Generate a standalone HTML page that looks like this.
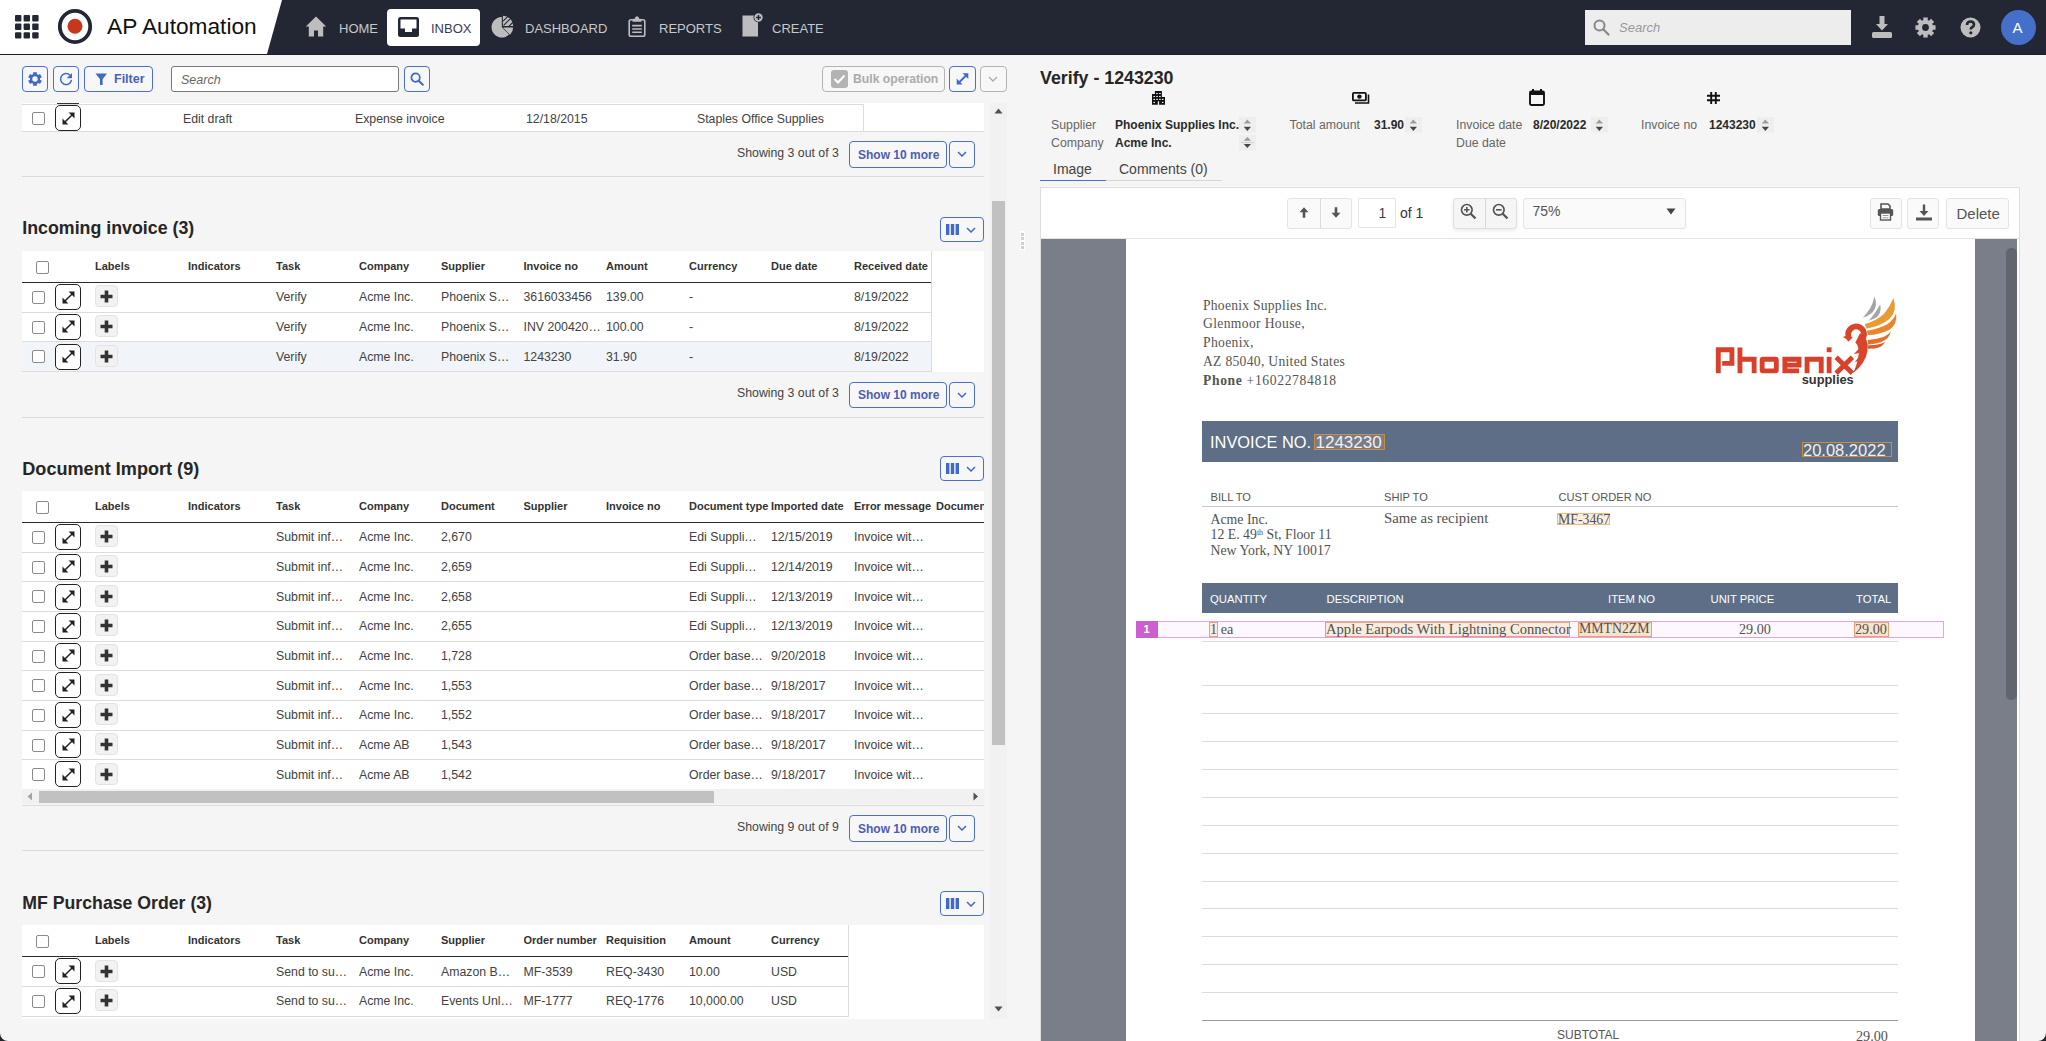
<!DOCTYPE html><html><head><meta charset="utf-8"><style>
*{box-sizing:border-box;margin:0;padding:0}
html,body{width:2046px;height:1041px;overflow:hidden;background:#f5f5f5;font-family:"Liberation Sans",sans-serif;color:#333;position:relative}
.a{position:absolute}
.t{position:absolute;white-space:nowrap;line-height:1}
#nav{position:absolute;left:0;top:0;width:2046px;height:55px;background:#222733;border-bottom:1px solid #1a1e27}
#brand{position:absolute;left:0;top:0;width:282px;height:54px;background:#fff;clip-path:polygon(0 0,282px 0,267px 54px,0 54px)}
.navtxt{position:absolute;color:#c8c8c8;font-size:13px;line-height:1;white-space:nowrap}
.bb{position:absolute;border:1px solid #4a6fd0;border-radius:4px;background:#f7f7f7}
.bg{position:absolute;border:1px solid #b4b4b4;border-radius:4px;background:#f7f7f7}
.cb{position:absolute;width:13px;height:13px;border:1px solid #8a8a8a;border-radius:2px;background:#fff}
.ex{position:absolute;width:26px;height:26px;border:1.3px solid #222;border-radius:5px;background:#fff}
.pl{position:absolute;width:23px;height:22px;border:1px solid #e3e3e3;border-radius:4px;background:#f2f2f2}
.cell{position:absolute;font-size:12.3px;color:#424242;white-space:nowrap;line-height:1}
.hd{position:absolute;font-size:11px;font-weight:bold;color:#333;white-space:nowrap;line-height:1}
.h2{position:absolute;font-size:17.5px;font-weight:bold;color:#262626;white-space:nowrap;line-height:1}
.hl{position:absolute;height:1px;background:#dcdcdc}
.show{position:absolute;font-size:12.3px;color:#444;white-space:nowrap;line-height:1}
.sbtn{position:absolute;font-size:12px;font-weight:bold;color:#4d5cb5;white-space:nowrap;line-height:1}
.ser{font-family:"Liberation Serif",serif}
</style></head><body>
<div id="nav"></div>
<div id="brand"></div>
<svg class="a" style="left:15.4px;top:15.2px" width="25" height="25"><rect x="0.0" y="0.0" width="6.4" height="6.4" rx="1" fill="#222733"/><rect x="0.0" y="8.6" width="6.4" height="6.4" rx="1" fill="#222733"/><rect x="0.0" y="17.2" width="6.4" height="6.4" rx="1" fill="#222733"/><rect x="8.6" y="0.0" width="6.4" height="6.4" rx="1" fill="#222733"/><rect x="8.6" y="8.6" width="6.4" height="6.4" rx="1" fill="#222733"/><rect x="8.6" y="17.2" width="6.4" height="6.4" rx="1" fill="#222733"/><rect x="17.2" y="0.0" width="6.4" height="6.4" rx="1" fill="#222733"/><rect x="17.2" y="8.6" width="6.4" height="6.4" rx="1" fill="#222733"/><rect x="17.2" y="17.2" width="6.4" height="6.4" rx="1" fill="#222733"/></svg>
<svg class="a" style="left:57px;top:8px" width="36" height="37"><ellipse cx="18" cy="18.5" rx="15.2" ry="15.6" fill="none" stroke="#222733" stroke-width="3.8"/><circle cx="18" cy="18.3" r="7.5" fill="#c8361c"/></svg>
<div class="t" style="left:107px;top:15px;font-size:22.7px;color:#111">AP Automation</div>
<svg class="a" style="left:305px;top:16px" width="22" height="21" viewBox="0 0 22 21"><path d="M11 0.5L0.8 10.5H3.8V20.5H9V14.5H13V20.5H18.2V10.5H21.2Z" fill="#bdbdbd"/></svg>
<div class="navtxt" style="left:339px;top:21.5px">HOME</div>
<div class="a" style="left:387px;top:9px;width:93px;height:37px;background:#fff;border-radius:4px"></div>
<svg class="a" style="left:398px;top:17px" width="21" height="20" viewBox="0 0 21 20"><rect x="0" y="0" width="21" height="20" rx="2.5" fill="#222733"/><path d="M2.5 2.5H18.5V11.5H14V15H7V11.5H2.5Z" fill="#fff"/></svg>
<div class="navtxt" style="left:431px;top:21.5px;color:#3b3b5c">INBOX</div>
<svg class="a" style="left:485px;top:10px" width="40" height="32" viewBox="0 0 40 32"><path d="M16.8 17.3V7A10.3 10.3 0 1 0 24.1 24.6Z" fill="#bdbdbd"/><path d="M17.9 17.6L25.1 24.8A10.3 10.3 0 0 0 28.1 17.6Z" fill="#bdbdbd"/><g transform="translate(1.1,-1.2)"><path d="M16.8 17.3H27.1A10.3 10.3 0 0 0 16.8 7Z" fill="#bdbdbd"/><path d="M17 12.3L21.8 7.5M17.5 16.6L25.2 8.9M22.8 17.5L27.6 12.7" stroke="#222733" stroke-width="1.1"/></g></svg>
<div class="navtxt" style="left:525px;top:21.5px">DASHBOARD</div>
<svg class="a" style="left:628px;top:15px" width="18" height="22" viewBox="0 0 18 22"><rect x="1.2" y="4.8" width="15.6" height="16.4" rx="1.8" fill="none" stroke="#bdbdbd" stroke-width="1.6"/><path d="M4.5 6.8V5.2Q4.5 3.8 6 3.8H6.8Q7 1.2 9 1.2Q11 1.2 11.2 3.8H12Q13.5 3.8 13.5 5.2V6.8Z" fill="#bdbdbd"/><path d="M4.2 10.6H13.8M4.2 14H13.8M4.2 17.2H13.8" stroke="#bdbdbd" stroke-width="1.6"/></svg>
<div class="navtxt" style="left:659px;top:21.5px">REPORTS</div>
<svg class="a" style="left:742px;top:12px" width="22" height="25" viewBox="0 0 22 25"><path d="M0.5 3.5H13V9H16V24.5H0.5Z" fill="#bdbdbd"/><circle cx="16.5" cy="5.5" r="5" fill="#222733"/><circle cx="16.5" cy="5.5" r="4.2" fill="#bdbdbd"/><path d="M16.5 3V8M14 5.5H19" stroke="#222733" stroke-width="1.5"/></svg>
<div class="navtxt" style="left:772px;top:21.5px">CREATE</div>
<div class="a" style="left:1585px;top:10px;width:266px;height:35px;background:#ededed"></div>
<svg class="a" style="left:1593px;top:19px" width="17" height="17" viewBox="0 0 17 17"><circle cx="6.5" cy="6.5" r="5" fill="none" stroke="#888" stroke-width="2"/><path d="M10.2 10.2L15.5 15.5" stroke="#888" stroke-width="2.2" stroke-linecap="round"/></svg>
<div class="t" style="left:1619px;top:21px;font-size:13px;font-style:italic;color:#999">Search</div>
<svg class="a" style="left:1872px;top:16px" width="20" height="22" viewBox="0 0 20 22"><path d="M7.5 0H12.5V8H16L10 14.5L4 8H7.5Z" fill="#bdbdbd"/><rect x="0" y="16" width="20" height="6" rx="1.5" fill="#bdbdbd"/></svg>
<svg class="a" style="left:1915px;top:17px" width="21" height="21"><polygon points="17.79,8.36 20.55,8.25 20.55,12.75 17.79,12.64 17.17,14.14 19.20,16.02 16.02,19.20 14.14,17.17 12.64,17.79 12.75,20.55 8.25,20.55 8.36,17.79 6.86,17.17 4.98,19.20 1.80,16.02 3.83,14.14 3.21,12.64 0.45,12.75 0.45,8.25 3.21,8.36 3.83,6.86 1.80,4.98 4.98,1.80 6.86,3.83 8.36,3.21 8.25,0.45 12.75,0.45 12.64,3.21 14.14,3.83 16.02,1.80 19.20,4.98 17.17,6.86" fill="#bdbdbd"/><circle cx="10.5" cy="10.5" r="7.3" fill="#bdbdbd"/><circle cx="10.5" cy="10.5" r="3.4" fill="#222733"/></svg>
<svg class="a" style="left:1960px;top:17px" width="21" height="21" viewBox="0 0 21 21"><circle cx="10.5" cy="10.5" r="10" fill="#bdbdbd"/><path d="M7 8Q7 4.5 10.5 4.5Q14 4.5 14 7.5Q14 9.5 11.8 10.5Q10.8 11 10.8 12.5" fill="none" stroke="#222733" stroke-width="2.6"/><circle cx="10.8" cy="15.8" r="1.6" fill="#222733"/></svg>
<div class="a" style="left:2001px;top:10px;width:35px;height:35px;border-radius:50%;background:#4470c9"></div>
<div class="t" style="left:2012.5px;top:20px;font-size:15px;color:#fff">A</div>
<div class="bb" style="left:22px;top:66px;width:26px;height:26px"></div>
<svg class="a" style="left:28px;top:72px" width="14" height="14"><polygon points="5.15,2.35 5.11,0.16 8.89,0.16 8.85,2.35 10.10,3.08 11.98,1.94 13.87,5.22 11.95,6.27 11.95,7.73 13.87,8.78 11.98,12.06 10.10,10.92 8.85,11.65 8.89,13.84 5.11,13.84 5.15,11.65 3.90,10.92 2.02,12.06 0.13,8.78 2.05,7.73 2.05,6.27 0.13,5.22 2.02,1.94 3.90,3.08" fill="#4169c9"/><circle cx="7" cy="7" r="5.0" fill="#4169c9"/><circle cx="7" cy="7" r="2.7" fill="#f7f7f7"/></svg>
<div class="bb" style="left:53px;top:66px;width:26px;height:26px"></div>
<svg class="a" style="left:59px;top:72px" width="14" height="14" viewBox="0 0 14 14"><path d="M10.9 3.1A5.5 5.5 0 1 0 12.5 7.9" fill="none" stroke="#4169c9" stroke-width="1.5"/><path d="M13 0.9V6.2H7.7Z" fill="#4169c9"/></svg>
<div class="bb" style="left:84px;top:66px;width:69px;height:26px"></div>
<svg class="a" style="left:95px;top:73px" width="13" height="13" viewBox="0 0 13 13"><path d="M0.5 0.5H12L7.6 6.2V12H5V6.2Z" fill="#4169c9"/></svg>
<div class="sbtn" style="left:114px;top:73px;font-size:12.5px;color:#4a5fc0">Filter</div>
<div class="a" style="left:171px;top:66px;width:228px;height:26px;border:1px solid #7a7a7a;border-radius:3px;background:#fff"></div>
<div class="t" style="left:181px;top:73.5px;font-size:12.5px;font-style:italic;color:#666">Search</div>
<div class="bb" style="left:404px;top:66px;width:26px;height:26px"></div>
<svg class="a" style="left:410px;top:72px" width="14" height="14" viewBox="0 0 14 14"><circle cx="5.6" cy="5.6" r="4.2" fill="none" stroke="#4169c9" stroke-width="1.8"/><path d="M8.7 8.7L12.8 12.8" stroke="#4169c9" stroke-width="2" stroke-linecap="round"/></svg>
<div class="bg" style="left:822px;top:66px;width:123px;height:26px"></div>
<div class="a" style="left:830.5px;top:70px;width:17.5px;height:18px;background:#b3b3b3;border-radius:3px"></div>
<svg class="a" style="left:833px;top:73px" width="13" height="12" viewBox="0 0 13 12"><path d="M1.5 6L5 9.5L11.5 2.5" fill="none" stroke="#fff" stroke-width="2"/></svg>
<div class="sbtn" style="left:853px;top:73px;color:#ababab;font-size:12.2px">Bulk operation</div>
<div class="bb" style="left:949px;top:66px;width:27px;height:26px"></div>
<svg class="a" style="left:955px;top:72px" width="15" height="14" viewBox="0 0 15 14"><path d="M3 11.5L12 2.5" stroke="#4169c9" stroke-width="1.8"/><path d="M7.5 1.2H13.3V7Z M1.7 6.5V12.5H7.5Z" fill="#4169c9"/></svg>
<div class="bg" style="left:980px;top:66px;width:27px;height:26px"></div>
<svg class="a" style="left:988px;top:76px" width="10" height="6" viewBox="0 0 10 6"><path d="M1 1L5 5L9 1" fill="none" stroke="#aaa" stroke-width="1.3"/></svg>
<div class="a" style="left:22px;top:103px;width:962px;height:28.5px;background:#fff"></div>
<div class="hl" style="left:22px;top:104px;width:841px"></div>
<div class="a" style="left:863px;top:104px;width:1px;height:27px;background:#dcdcdc"></div>
<div class="hl" style="left:22px;top:131px;width:962px"></div>
<div class="a" style="left:57px;top:102.5px;width:22px;height:1.5px;background:#333"></div>
<div class="cb" style="left:31.5px;top:112px"></div>
<div class="ex" style="left:55px;top:105px"></div>
<svg class="a" style="left:60.5px;top:110.5px" width="15" height="15" viewBox="0 0 15 15"><path d="M3.2 11.8L11.8 3.2" stroke="#222" stroke-width="1.5"/><path d="M7.6 1.5H13.5V7.4Z M1.5 7.6V13.5H7.4Z" fill="#222"/></svg>
<div class="cell" style="left:183px;top:113px">Edit draft</div>
<div class="cell" style="left:355px;top:113px">Expense invoice</div>
<div class="cell" style="left:526px;top:113px">12/18/2015</div>
<div class="cell" style="left:697px;top:113px">Staples Office Supplies</div>
<div class="show" style="left:737px;top:146.8px">Showing 3 out of 3</div>
<div class="bb" style="left:849px;top:141.3px;width:97.5px;height:26.5px"></div>
<div class="sbtn" style="left:858px;top:148.9px">Show 10 more</div>
<div class="bb" style="left:949px;top:141.3px;width:26px;height:26.5px"></div>
<svg class="a" style="left:957px;top:151.3px" width="10" height="6" viewBox="0 0 10 6"><path d="M1 1L5 5L9 1" fill="none" stroke="#4169c9" stroke-width="1.5"/></svg>
<div class="hl" style="left:22px;top:176px;width:962px;background:#d9d9d9"></div>
<div class="h2" style="left:22.3px;top:220px;font-size:17.8px">Incoming invoice (3)</div>
<div class="bb" style="left:940px;top:216.5px;width:44px;height:25.5px;background:#f7f7f7"></div>
<svg class="a" style="left:946px;top:223.5px" width="14" height="12" viewBox="0 0 14 12"><rect x="0" y="0" width="3.4" height="11" fill="#4169c9"/><rect x="4.8" y="0" width="3.4" height="11" fill="#4169c9"/><rect x="9.6" y="0" width="3.4" height="11" fill="#4169c9"/></svg>
<svg class="a" style="left:966px;top:226.5px" width="10" height="6" viewBox="0 0 10 6"><path d="M1 1L5 5L9 1" fill="none" stroke="#4169c9" stroke-width="1.5"/></svg>
<div class="a" style="left:22px;top:251px;width:962px;height:121.05000000000001px;background:#fff"></div>
<div class="a" style="left:931px;top:251px;width:1px;height:121.05000000000001px;background:#dcdcdc"></div>
<div class="cb" style="left:36px;top:260.5px"></div>
<div class="hd" style="left:95px;top:261.2px">Labels</div>
<div class="hd" style="left:188px;top:261.2px">Indicators</div>
<div class="hd" style="left:276px;top:261.2px;width:82px;overflow:hidden">Task</div>
<div class="hd" style="left:359px;top:261.2px;width:82px;overflow:hidden">Company</div>
<div class="hd" style="left:441px;top:261.2px;width:82px;overflow:hidden">Supplier</div>
<div class="hd" style="left:523.5px;top:261.2px;width:82px;overflow:hidden">Invoice no</div>
<div class="hd" style="left:606px;top:261.2px;width:82px;overflow:hidden">Amount</div>
<div class="hd" style="left:689px;top:261.2px;width:82px;overflow:hidden">Currency</div>
<div class="hd" style="left:771px;top:261.2px;width:82px;overflow:hidden">Due date</div>
<div class="hd" style="left:854px;top:261.2px;width:82px;overflow:hidden">Received date</div>
<div class="a" style="left:22px;top:281.5px;width:909px;height:1.6px;background:#2b2b2b"></div>
<div class="hl" style="left:22px;top:311.80px;width:909px"></div>
<div class="cb" style="left:31.5px;top:291.0px"></div>
<div class="ex" style="left:55px;top:284.2px"></div>
<svg class="a" style="left:60.5px;top:289.7px" width="15" height="15" viewBox="0 0 15 15"><path d="M3.2 11.8L11.8 3.2" stroke="#222" stroke-width="1.5"/><path d="M7.6 1.5H13.5V7.4Z M1.5 7.6V13.5H7.4Z" fill="#222"/></svg>
<div class="pl" style="left:95.3px;top:285.3px"></div>
<svg class="a" style="left:100.3px;top:290.3px" width="13" height="13" viewBox="0 0 13 13"><path d="M6.5 0.5V12.5M0.5 6.5H12.5" stroke="#333" stroke-width="3.6"/></svg>
<div class="cell" style="left:276px;top:291.30px">Verify</div>
<div class="cell" style="left:359px;top:291.30px">Acme Inc.</div>
<div class="cell" style="left:441px;top:291.30px">Phoenix S…</div>
<div class="cell" style="left:523.5px;top:291.30px">3616033456</div>
<div class="cell" style="left:606px;top:291.30px">139.00</div>
<div class="cell" style="left:689px;top:291.30px">-</div>
<div class="cell" style="left:854px;top:291.30px">8/19/2022</div>
<div class="hl" style="left:22px;top:341.45px;width:909px"></div>
<div class="cb" style="left:31.5px;top:320.65px"></div>
<div class="ex" style="left:55px;top:313.85px"></div>
<svg class="a" style="left:60.5px;top:319.35px" width="15" height="15" viewBox="0 0 15 15"><path d="M3.2 11.8L11.8 3.2" stroke="#222" stroke-width="1.5"/><path d="M7.6 1.5H13.5V7.4Z M1.5 7.6V13.5H7.4Z" fill="#222"/></svg>
<div class="pl" style="left:95.3px;top:314.95px"></div>
<svg class="a" style="left:100.3px;top:319.95px" width="13" height="13" viewBox="0 0 13 13"><path d="M6.5 0.5V12.5M0.5 6.5H12.5" stroke="#333" stroke-width="3.6"/></svg>
<div class="cell" style="left:276px;top:320.95px">Verify</div>
<div class="cell" style="left:359px;top:320.95px">Acme Inc.</div>
<div class="cell" style="left:441px;top:320.95px">Phoenix S…</div>
<div class="cell" style="left:523.5px;top:320.95px">INV 200420…</div>
<div class="cell" style="left:606px;top:320.95px">100.00</div>
<div class="cell" style="left:689px;top:320.95px">-</div>
<div class="cell" style="left:854px;top:320.95px">8/19/2022</div>
<div class="a" style="left:22px;top:342.40000000000003px;width:909px;height:29.65px;background:#f1f4f9"></div>
<div class="hl" style="left:22px;top:371.10px;width:909px"></div>
<div class="cb" style="left:31.5px;top:350.3px"></div>
<div class="ex" style="left:55px;top:343.5px"></div>
<svg class="a" style="left:60.5px;top:349.0px" width="15" height="15" viewBox="0 0 15 15"><path d="M3.2 11.8L11.8 3.2" stroke="#222" stroke-width="1.5"/><path d="M7.6 1.5H13.5V7.4Z M1.5 7.6V13.5H7.4Z" fill="#222"/></svg>
<div class="pl" style="left:95.3px;top:344.6px"></div>
<svg class="a" style="left:100.3px;top:349.6px" width="13" height="13" viewBox="0 0 13 13"><path d="M6.5 0.5V12.5M0.5 6.5H12.5" stroke="#333" stroke-width="3.6"/></svg>
<div class="cell" style="left:276px;top:350.60px">Verify</div>
<div class="cell" style="left:359px;top:350.60px">Acme Inc.</div>
<div class="cell" style="left:441px;top:350.60px">Phoenix S…</div>
<div class="cell" style="left:523.5px;top:350.60px">1243230</div>
<div class="cell" style="left:606px;top:350.60px">31.90</div>
<div class="cell" style="left:689px;top:350.60px">-</div>
<div class="cell" style="left:854px;top:350.60px">8/19/2022</div>
<div class="show" style="left:737px;top:387.3px">Showing 3 out of 3</div>
<div class="bb" style="left:849px;top:381.8px;width:97.5px;height:26.5px"></div>
<div class="sbtn" style="left:858px;top:389.40000000000003px">Show 10 more</div>
<div class="bb" style="left:949px;top:381.8px;width:26px;height:26.5px"></div>
<svg class="a" style="left:957px;top:391.8px" width="10" height="6" viewBox="0 0 10 6"><path d="M1 1L5 5L9 1" fill="none" stroke="#4169c9" stroke-width="1.5"/></svg>
<div class="hl" style="left:22px;top:416.5px;width:962px;background:#d9d9d9"></div>
<div class="h2" style="left:22.3px;top:459.6px;font-size:18.1px">Document Import (9)</div>
<div class="bb" style="left:940px;top:455.5px;width:44px;height:25.5px;background:#f7f7f7"></div>
<svg class="a" style="left:946px;top:462.5px" width="14" height="12" viewBox="0 0 14 12"><rect x="0" y="0" width="3.4" height="11" fill="#4169c9"/><rect x="4.8" y="0" width="3.4" height="11" fill="#4169c9"/><rect x="9.6" y="0" width="3.4" height="11" fill="#4169c9"/></svg>
<svg class="a" style="left:966px;top:465.5px" width="10" height="6" viewBox="0 0 10 6"><path d="M1 1L5 5L9 1" fill="none" stroke="#4169c9" stroke-width="1.5"/></svg>
<div class="a" style="left:22px;top:491px;width:962px;height:298.95000000000005px;background:#fff"></div>
<div class="cb" style="left:36px;top:500.5px"></div>
<div class="hd" style="left:95px;top:501.2px">Labels</div>
<div class="hd" style="left:188px;top:501.2px">Indicators</div>
<div class="hd" style="left:276px;top:501.2px;width:82px;overflow:hidden">Task</div>
<div class="hd" style="left:359px;top:501.2px;width:82px;overflow:hidden">Company</div>
<div class="hd" style="left:441px;top:501.2px;width:82px;overflow:hidden">Document</div>
<div class="hd" style="left:523.5px;top:501.2px;width:82px;overflow:hidden">Supplier</div>
<div class="hd" style="left:606px;top:501.2px;width:82px;overflow:hidden">Invoice no</div>
<div class="hd" style="left:689px;top:501.2px;width:82px;overflow:hidden">Document type</div>
<div class="hd" style="left:771px;top:501.2px;width:82px;overflow:hidden">Imported date</div>
<div class="hd" style="left:854px;top:501.2px;width:82px;overflow:hidden">Error message</div>
<div class="hd" style="left:936px;top:501.2px;width:82px;overflow:hidden">Documen</div>
<div class="a" style="left:22px;top:521.5px;width:962px;height:1.6px;background:#2b2b2b"></div>
<div class="hl" style="left:22px;top:551.80px;width:962px"></div>
<div class="cb" style="left:31.5px;top:531.0px"></div>
<div class="ex" style="left:55px;top:524.2px"></div>
<svg class="a" style="left:60.5px;top:529.7px" width="15" height="15" viewBox="0 0 15 15"><path d="M3.2 11.8L11.8 3.2" stroke="#222" stroke-width="1.5"/><path d="M7.6 1.5H13.5V7.4Z M1.5 7.6V13.5H7.4Z" fill="#222"/></svg>
<div class="pl" style="left:95.3px;top:525.3px"></div>
<svg class="a" style="left:100.3px;top:530.3px" width="13" height="13" viewBox="0 0 13 13"><path d="M6.5 0.5V12.5M0.5 6.5H12.5" stroke="#333" stroke-width="3.6"/></svg>
<div class="cell" style="left:276px;top:531.30px">Submit inf…</div>
<div class="cell" style="left:359px;top:531.30px">Acme Inc.</div>
<div class="cell" style="left:441px;top:531.30px">2,670</div>
<div class="cell" style="left:689px;top:531.30px">Edi Suppli…</div>
<div class="cell" style="left:771px;top:531.30px">12/15/2019</div>
<div class="cell" style="left:854px;top:531.30px">Invoice wit…</div>
<div class="hl" style="left:22px;top:581.45px;width:962px"></div>
<div class="cb" style="left:31.5px;top:560.65px"></div>
<div class="ex" style="left:55px;top:553.85px"></div>
<svg class="a" style="left:60.5px;top:559.35px" width="15" height="15" viewBox="0 0 15 15"><path d="M3.2 11.8L11.8 3.2" stroke="#222" stroke-width="1.5"/><path d="M7.6 1.5H13.5V7.4Z M1.5 7.6V13.5H7.4Z" fill="#222"/></svg>
<div class="pl" style="left:95.3px;top:554.95px"></div>
<svg class="a" style="left:100.3px;top:559.95px" width="13" height="13" viewBox="0 0 13 13"><path d="M6.5 0.5V12.5M0.5 6.5H12.5" stroke="#333" stroke-width="3.6"/></svg>
<div class="cell" style="left:276px;top:560.95px">Submit inf…</div>
<div class="cell" style="left:359px;top:560.95px">Acme Inc.</div>
<div class="cell" style="left:441px;top:560.95px">2,659</div>
<div class="cell" style="left:689px;top:560.95px">Edi Suppli…</div>
<div class="cell" style="left:771px;top:560.95px">12/14/2019</div>
<div class="cell" style="left:854px;top:560.95px">Invoice wit…</div>
<div class="hl" style="left:22px;top:611.10px;width:962px"></div>
<div class="cb" style="left:31.5px;top:590.3px"></div>
<div class="ex" style="left:55px;top:583.5px"></div>
<svg class="a" style="left:60.5px;top:589.0px" width="15" height="15" viewBox="0 0 15 15"><path d="M3.2 11.8L11.8 3.2" stroke="#222" stroke-width="1.5"/><path d="M7.6 1.5H13.5V7.4Z M1.5 7.6V13.5H7.4Z" fill="#222"/></svg>
<div class="pl" style="left:95.3px;top:584.6px"></div>
<svg class="a" style="left:100.3px;top:589.6px" width="13" height="13" viewBox="0 0 13 13"><path d="M6.5 0.5V12.5M0.5 6.5H12.5" stroke="#333" stroke-width="3.6"/></svg>
<div class="cell" style="left:276px;top:590.60px">Submit inf…</div>
<div class="cell" style="left:359px;top:590.60px">Acme Inc.</div>
<div class="cell" style="left:441px;top:590.60px">2,658</div>
<div class="cell" style="left:689px;top:590.60px">Edi Suppli…</div>
<div class="cell" style="left:771px;top:590.60px">12/13/2019</div>
<div class="cell" style="left:854px;top:590.60px">Invoice wit…</div>
<div class="hl" style="left:22px;top:640.75px;width:962px"></div>
<div class="cb" style="left:31.5px;top:619.95px"></div>
<div class="ex" style="left:55px;top:613.15px"></div>
<svg class="a" style="left:60.5px;top:618.65px" width="15" height="15" viewBox="0 0 15 15"><path d="M3.2 11.8L11.8 3.2" stroke="#222" stroke-width="1.5"/><path d="M7.6 1.5H13.5V7.4Z M1.5 7.6V13.5H7.4Z" fill="#222"/></svg>
<div class="pl" style="left:95.3px;top:614.25px"></div>
<svg class="a" style="left:100.3px;top:619.25px" width="13" height="13" viewBox="0 0 13 13"><path d="M6.5 0.5V12.5M0.5 6.5H12.5" stroke="#333" stroke-width="3.6"/></svg>
<div class="cell" style="left:276px;top:620.25px">Submit inf…</div>
<div class="cell" style="left:359px;top:620.25px">Acme Inc.</div>
<div class="cell" style="left:441px;top:620.25px">2,655</div>
<div class="cell" style="left:689px;top:620.25px">Edi Suppli…</div>
<div class="cell" style="left:771px;top:620.25px">12/13/2019</div>
<div class="cell" style="left:854px;top:620.25px">Invoice wit…</div>
<div class="hl" style="left:22px;top:670.40px;width:962px"></div>
<div class="cb" style="left:31.5px;top:649.6px"></div>
<div class="ex" style="left:55px;top:642.8px"></div>
<svg class="a" style="left:60.5px;top:648.3px" width="15" height="15" viewBox="0 0 15 15"><path d="M3.2 11.8L11.8 3.2" stroke="#222" stroke-width="1.5"/><path d="M7.6 1.5H13.5V7.4Z M1.5 7.6V13.5H7.4Z" fill="#222"/></svg>
<div class="pl" style="left:95.3px;top:643.9px"></div>
<svg class="a" style="left:100.3px;top:648.9px" width="13" height="13" viewBox="0 0 13 13"><path d="M6.5 0.5V12.5M0.5 6.5H12.5" stroke="#333" stroke-width="3.6"/></svg>
<div class="cell" style="left:276px;top:649.90px">Submit inf…</div>
<div class="cell" style="left:359px;top:649.90px">Acme Inc.</div>
<div class="cell" style="left:441px;top:649.90px">1,728</div>
<div class="cell" style="left:689px;top:649.90px">Order base…</div>
<div class="cell" style="left:771px;top:649.90px">9/20/2018</div>
<div class="cell" style="left:854px;top:649.90px">Invoice wit…</div>
<div class="hl" style="left:22px;top:700.05px;width:962px"></div>
<div class="cb" style="left:31.5px;top:679.25px"></div>
<div class="ex" style="left:55px;top:672.45px"></div>
<svg class="a" style="left:60.5px;top:677.95px" width="15" height="15" viewBox="0 0 15 15"><path d="M3.2 11.8L11.8 3.2" stroke="#222" stroke-width="1.5"/><path d="M7.6 1.5H13.5V7.4Z M1.5 7.6V13.5H7.4Z" fill="#222"/></svg>
<div class="pl" style="left:95.3px;top:673.55px"></div>
<svg class="a" style="left:100.3px;top:678.55px" width="13" height="13" viewBox="0 0 13 13"><path d="M6.5 0.5V12.5M0.5 6.5H12.5" stroke="#333" stroke-width="3.6"/></svg>
<div class="cell" style="left:276px;top:679.55px">Submit inf…</div>
<div class="cell" style="left:359px;top:679.55px">Acme Inc.</div>
<div class="cell" style="left:441px;top:679.55px">1,553</div>
<div class="cell" style="left:689px;top:679.55px">Order base…</div>
<div class="cell" style="left:771px;top:679.55px">9/18/2017</div>
<div class="cell" style="left:854px;top:679.55px">Invoice wit…</div>
<div class="hl" style="left:22px;top:729.70px;width:962px"></div>
<div class="cb" style="left:31.5px;top:708.9px"></div>
<div class="ex" style="left:55px;top:702.1px"></div>
<svg class="a" style="left:60.5px;top:707.6px" width="15" height="15" viewBox="0 0 15 15"><path d="M3.2 11.8L11.8 3.2" stroke="#222" stroke-width="1.5"/><path d="M7.6 1.5H13.5V7.4Z M1.5 7.6V13.5H7.4Z" fill="#222"/></svg>
<div class="pl" style="left:95.3px;top:703.2px"></div>
<svg class="a" style="left:100.3px;top:708.2px" width="13" height="13" viewBox="0 0 13 13"><path d="M6.5 0.5V12.5M0.5 6.5H12.5" stroke="#333" stroke-width="3.6"/></svg>
<div class="cell" style="left:276px;top:709.20px">Submit inf…</div>
<div class="cell" style="left:359px;top:709.20px">Acme Inc.</div>
<div class="cell" style="left:441px;top:709.20px">1,552</div>
<div class="cell" style="left:689px;top:709.20px">Order base…</div>
<div class="cell" style="left:771px;top:709.20px">9/18/2017</div>
<div class="cell" style="left:854px;top:709.20px">Invoice wit…</div>
<div class="hl" style="left:22px;top:759.35px;width:962px"></div>
<div class="cb" style="left:31.5px;top:738.55px"></div>
<div class="ex" style="left:55px;top:731.75px"></div>
<svg class="a" style="left:60.5px;top:737.25px" width="15" height="15" viewBox="0 0 15 15"><path d="M3.2 11.8L11.8 3.2" stroke="#222" stroke-width="1.5"/><path d="M7.6 1.5H13.5V7.4Z M1.5 7.6V13.5H7.4Z" fill="#222"/></svg>
<div class="pl" style="left:95.3px;top:732.85px"></div>
<svg class="a" style="left:100.3px;top:737.85px" width="13" height="13" viewBox="0 0 13 13"><path d="M6.5 0.5V12.5M0.5 6.5H12.5" stroke="#333" stroke-width="3.6"/></svg>
<div class="cell" style="left:276px;top:738.85px">Submit inf…</div>
<div class="cell" style="left:359px;top:738.85px">Acme AB</div>
<div class="cell" style="left:441px;top:738.85px">1,543</div>
<div class="cell" style="left:689px;top:738.85px">Order base…</div>
<div class="cell" style="left:771px;top:738.85px">9/18/2017</div>
<div class="cell" style="left:854px;top:738.85px">Invoice wit…</div>
<div class="hl" style="left:22px;top:789.00px;width:962px"></div>
<div class="cb" style="left:31.5px;top:768.2px"></div>
<div class="ex" style="left:55px;top:761.4px"></div>
<svg class="a" style="left:60.5px;top:766.9px" width="15" height="15" viewBox="0 0 15 15"><path d="M3.2 11.8L11.8 3.2" stroke="#222" stroke-width="1.5"/><path d="M7.6 1.5H13.5V7.4Z M1.5 7.6V13.5H7.4Z" fill="#222"/></svg>
<div class="pl" style="left:95.3px;top:762.5px"></div>
<svg class="a" style="left:100.3px;top:767.5px" width="13" height="13" viewBox="0 0 13 13"><path d="M6.5 0.5V12.5M0.5 6.5H12.5" stroke="#333" stroke-width="3.6"/></svg>
<div class="cell" style="left:276px;top:768.50px">Submit inf…</div>
<div class="cell" style="left:359px;top:768.50px">Acme AB</div>
<div class="cell" style="left:441px;top:768.50px">1,542</div>
<div class="cell" style="left:689px;top:768.50px">Order base…</div>
<div class="cell" style="left:771px;top:768.50px">9/18/2017</div>
<div class="cell" style="left:854px;top:768.50px">Invoice wit…</div>
<div class="a" style="left:22px;top:788.5px;width:962px;height:15.5px;background:#f1f1f1"></div>
<div class="a" style="left:39px;top:790.5px;width:675px;height:12px;background:#c1c1c1"></div>
<svg class="a" style="left:27px;top:792px" width="6" height="9"><path d="M5 0.5V8.5L0.5 4.5Z" fill="#a3a3a3"/></svg>
<svg class="a" style="left:973px;top:792px" width="6" height="9"><path d="M0.5 0.5V8.5L5 4.5Z" fill="#505050"/></svg>
<div class="hl" style="left:22px;top:804.5px;width:962px"></div>
<div class="show" style="left:737px;top:820.8px">Showing 9 out of 9</div>
<div class="bb" style="left:849px;top:815.3px;width:97.5px;height:26.5px"></div>
<div class="sbtn" style="left:858px;top:822.9px">Show 10 more</div>
<div class="bb" style="left:949px;top:815.3px;width:26px;height:26.5px"></div>
<svg class="a" style="left:957px;top:825.3px" width="10" height="6" viewBox="0 0 10 6"><path d="M1 1L5 5L9 1" fill="none" stroke="#4169c9" stroke-width="1.5"/></svg>
<div class="hl" style="left:22px;top:850px;width:962px;background:#d9d9d9"></div>
<div class="h2" style="left:22.3px;top:895px;font-size:17.7px">MF Purchase Order (3)</div>
<div class="bb" style="left:940px;top:890.5px;width:44px;height:25.5px;background:#f7f7f7"></div>
<svg class="a" style="left:946px;top:897.5px" width="14" height="12" viewBox="0 0 14 12"><rect x="0" y="0" width="3.4" height="11" fill="#4169c9"/><rect x="4.8" y="0" width="3.4" height="11" fill="#4169c9"/><rect x="9.6" y="0" width="3.4" height="11" fill="#4169c9"/></svg>
<svg class="a" style="left:966px;top:900.5px" width="10" height="6" viewBox="0 0 10 6"><path d="M1 1L5 5L9 1" fill="none" stroke="#4169c9" stroke-width="1.5"/></svg>
<div class="a" style="left:22px;top:1015px;width:962px;height:4px;background:#fff"></div>
<div class="a" style="left:22px;top:925.2px;width:962px;height:91.39999999999998px;background:#fff"></div>
<div class="a" style="left:848px;top:925.2px;width:1px;height:91.39999999999998px;background:#dcdcdc"></div>
<div class="cb" style="left:36px;top:934.7px"></div>
<div class="hd" style="left:95px;top:935.4000000000001px">Labels</div>
<div class="hd" style="left:188px;top:935.4000000000001px">Indicators</div>
<div class="hd" style="left:276px;top:935.4000000000001px;width:82px;overflow:hidden">Task</div>
<div class="hd" style="left:359px;top:935.4000000000001px;width:82px;overflow:hidden">Company</div>
<div class="hd" style="left:441px;top:935.4000000000001px;width:82px;overflow:hidden">Supplier</div>
<div class="hd" style="left:523.5px;top:935.4000000000001px;width:82px;overflow:hidden">Order number</div>
<div class="hd" style="left:606px;top:935.4000000000001px;width:82px;overflow:hidden">Requisition</div>
<div class="hd" style="left:689px;top:935.4000000000001px;width:82px;overflow:hidden">Amount</div>
<div class="hd" style="left:771px;top:935.4000000000001px;width:82px;overflow:hidden">Currency</div>
<div class="a" style="left:22px;top:955.7px;width:826px;height:1.6px;background:#2b2b2b"></div>
<div class="hl" style="left:22px;top:986.00px;width:826px"></div>
<div class="cb" style="left:31.5px;top:965.2px"></div>
<div class="ex" style="left:55px;top:958.4px"></div>
<svg class="a" style="left:60.5px;top:963.9px" width="15" height="15" viewBox="0 0 15 15"><path d="M3.2 11.8L11.8 3.2" stroke="#222" stroke-width="1.5"/><path d="M7.6 1.5H13.5V7.4Z M1.5 7.6V13.5H7.4Z" fill="#222"/></svg>
<div class="pl" style="left:95.3px;top:959.5px"></div>
<svg class="a" style="left:100.3px;top:964.5px" width="13" height="13" viewBox="0 0 13 13"><path d="M6.5 0.5V12.5M0.5 6.5H12.5" stroke="#333" stroke-width="3.6"/></svg>
<div class="cell" style="left:276px;top:965.50px">Send to su…</div>
<div class="cell" style="left:359px;top:965.50px">Acme Inc.</div>
<div class="cell" style="left:441px;top:965.50px">Amazon B…</div>
<div class="cell" style="left:523.5px;top:965.50px">MF-3539</div>
<div class="cell" style="left:606px;top:965.50px">REQ-3430</div>
<div class="cell" style="left:689px;top:965.50px">10.00</div>
<div class="cell" style="left:771px;top:965.50px">USD</div>
<div class="hl" style="left:22px;top:1015.65px;width:826px"></div>
<div class="cb" style="left:31.5px;top:994.85px"></div>
<div class="ex" style="left:55px;top:988.05px"></div>
<svg class="a" style="left:60.5px;top:993.55px" width="15" height="15" viewBox="0 0 15 15"><path d="M3.2 11.8L11.8 3.2" stroke="#222" stroke-width="1.5"/><path d="M7.6 1.5H13.5V7.4Z M1.5 7.6V13.5H7.4Z" fill="#222"/></svg>
<div class="pl" style="left:95.3px;top:989.15px"></div>
<svg class="a" style="left:100.3px;top:994.15px" width="13" height="13" viewBox="0 0 13 13"><path d="M6.5 0.5V12.5M0.5 6.5H12.5" stroke="#333" stroke-width="3.6"/></svg>
<div class="cell" style="left:276px;top:995.15px">Send to su…</div>
<div class="cell" style="left:359px;top:995.15px">Acme Inc.</div>
<div class="cell" style="left:441px;top:995.15px">Events Unl…</div>
<div class="cell" style="left:523.5px;top:995.15px">MF-1777</div>
<div class="cell" style="left:606px;top:995.15px">REQ-1776</div>
<div class="cell" style="left:689px;top:995.15px">10,000.00</div>
<div class="cell" style="left:771px;top:995.15px">USD</div>
<div class="a" style="left:984px;top:103px;width:6px;height:916px;background:#f5f5f5"></div>
<div class="a" style="left:0px;top:1019px;width:1030px;height:30px;background:#f5f5f5"></div>
<div class="a" style="left:990px;top:103px;width:17px;height:915.5px;background:#f1f1f1"></div>
<div class="a" style="left:992px;top:201px;width:13px;height:544px;background:#c1c1c1"></div>
<svg class="a" style="left:994px;top:108px" width="9" height="6"><path d="M0.5 5.5H8.5L4.5 0.5Z" fill="#505050"/></svg>
<svg class="a" style="left:994px;top:1006px" width="9" height="6"><path d="M0.5 0.5H8.5L4.5 5.5Z" fill="#505050"/></svg>
<div class="a" style="left:1020px;top:231px;width:5px;height:19px;background:#fff"></div>
<div class="a" style="left:1021px;top:232.5px;width:3px;height:3px;background:#d0d0d0"></div>
<div class="a" style="left:1021px;top:237.0px;width:3px;height:3px;background:#d0d0d0"></div>
<div class="a" style="left:1021px;top:241.5px;width:3px;height:3px;background:#d0d0d0"></div>
<div class="a" style="left:1021px;top:246.0px;width:3px;height:3px;background:#d0d0d0"></div>
<div class="h2" style="left:1040px;top:69.5px;font-size:17.8px">Verify - 1243230</div>
<svg class="a" style="left:1152px;top:91px" width="13" height="14" viewBox="0 0 13 14"><path d="M0 3.1H2.9V0H9.9V6H13V13.8H7.1V10.3H5.8V13.8H0Z" fill="#111"/><rect x="4.2" y="1.95" width="1.6" height="1.1" fill="#f5f5f5"/><rect x="7.1" y="1.95" width="1.6" height="1.1" fill="#f5f5f5"/><rect x="1.4" y="4.95" width="1.6" height="1.1" fill="#f5f5f5"/><rect x="4.2" y="4.95" width="1.6" height="1.1" fill="#f5f5f5"/><rect x="7.1" y="4.95" width="1.6" height="1.1" fill="#f5f5f5"/><rect x="1.4" y="7.85" width="1.6" height="1.1" fill="#f5f5f5"/><rect x="4.2" y="7.85" width="1.6" height="1.1" fill="#f5f5f5"/><rect x="7.1" y="7.85" width="1.6" height="1.1" fill="#f5f5f5"/><rect x="9.9" y="7.85" width="1.6" height="1.1" fill="#f5f5f5"/><rect x="1.4" y="10.85" width="1.6" height="1.1" fill="#f5f5f5"/><rect x="9.9" y="10.85" width="1.6" height="1.1" fill="#f5f5f5"/></svg>
<svg class="a" style="left:1352px;top:92px" width="18" height="12" viewBox="0 0 18 12"><rect x="0.9" y="0.9" width="13" height="7.5" rx="1" fill="none" stroke="#111" stroke-width="1.8"/><circle cx="7.4" cy="4.6" r="2.2" fill="#111"/><path d="M16.5 2.5V11H3" fill="none" stroke="#111" stroke-width="1.6"/></svg>
<svg class="a" style="left:1529px;top:88.6px" width="16" height="17" viewBox="0 0 16 17"><rect x="1" y="2.5" width="14" height="13.5" rx="1.2" fill="none" stroke="#111" stroke-width="1.9"/><rect x="1" y="2.5" width="14" height="3.5" fill="#111"/><rect x="3" y="0" width="2" height="3" fill="#111"/><rect x="11" y="0" width="2" height="3" fill="#111"/></svg>
<svg class="a" style="left:1706.5px;top:92px" width="13" height="12" viewBox="0 0 13 12"><path d="M4.2 0V12M8.8 0V12M0 3.8H13M0 8.2H13" stroke="#111" stroke-width="1.9"/></svg>
<div class="t" style="left:1051px;top:118.7px;font-size:12.3px;color:#666">Supplier</div>
<div class="t" style="left:1115px;top:118.7px;font-size:12px;font-weight:bold;color:#2a2a2a">Phoenix Supplies Inc.</div>
<svg class="a" style="left:1239.2px;top:117.2px" width="17" height="16" viewBox="0 0 17 16"><rect width="17" height="15.6" fill="#eeeeee"/><path d="M4.7 6.5H12L8.35 2.6Z" fill="#9c9c9c"/><path d="M4.7 9.8H12L8.35 13.9Z" fill="#474747"/></svg>
<div class="t" style="left:1051px;top:136.7px;font-size:12.3px;color:#666">Company</div>
<div class="t" style="left:1115px;top:136.7px;font-size:12px;font-weight:bold;color:#2a2a2a">Acme Inc.</div>
<svg class="a" style="left:1239.2px;top:134.6px" width="17" height="16" viewBox="0 0 17 16"><rect width="17" height="15.6" fill="#eeeeee"/><path d="M2 7.6H15" stroke="#cfcfcf" stroke-width="1"/><path d="M4.7 5.8H12L8.35 1.9Z" fill="#9c9c9c"/><path d="M4.7 8.9H12L8.35 13Z" fill="#474747"/></svg>
<div class="t" style="left:1289.5px;top:118.7px;font-size:12.3px;color:#666">Total amount</div>
<div class="t" style="left:1374px;top:118.7px;font-size:12px;font-weight:bold;color:#2a2a2a">31.90</div>
<svg class="a" style="left:1405px;top:117px" width="17" height="16" viewBox="0 0 17 16"><rect width="17" height="15.6" fill="#eeeeee"/><path d="M4.7 6.5H12L8.35 2.6Z" fill="#9c9c9c"/><path d="M4.7 9.8H12L8.35 13.9Z" fill="#474747"/></svg>
<div class="t" style="left:1456px;top:118.7px;font-size:12.3px;color:#666">Invoice date</div>
<div class="t" style="left:1533px;top:118.7px;font-size:12px;font-weight:bold;color:#2a2a2a">8/20/2022</div>
<svg class="a" style="left:1591px;top:117px" width="17" height="16" viewBox="0 0 17 16"><rect width="17" height="15.6" fill="#eeeeee"/><path d="M4.7 6.5H12L8.35 2.6Z" fill="#9c9c9c"/><path d="M4.7 9.8H12L8.35 13.9Z" fill="#474747"/></svg>
<div class="t" style="left:1456px;top:136.7px;font-size:12.3px;color:#666">Due date</div>
<div class="t" style="left:1641px;top:118.7px;font-size:12.3px;color:#666">Invoice no</div>
<div class="t" style="left:1709px;top:118.7px;font-size:12px;font-weight:bold;color:#2a2a2a">1243230</div>
<svg class="a" style="left:1757px;top:117px" width="17" height="16" viewBox="0 0 17 16"><rect width="17" height="15.6" fill="#eeeeee"/><path d="M4.7 6.5H12L8.35 2.6Z" fill="#9c9c9c"/><path d="M4.7 9.8H12L8.35 13.9Z" fill="#474747"/></svg>
<div class="t" style="left:1053px;top:161.7px;font-size:14px;color:#444">Image</div>
<div class="t" style="left:1119px;top:161.7px;font-size:14px;color:#444">Comments (0)</div>
<div class="a" style="left:1106px;top:180px;width:116px;height:1px;background:#d6d6d6"></div>
<div class="a" style="left:1040px;top:179.8px;width:66px;height:1.6px;background:#4a6fd0"></div>
<div class="a" style="left:1040px;top:187px;width:980px;height:900px;background:#fff;border:1px solid #dedede"></div>
<div class="a" style="left:1041px;top:238px;width:978px;height:1px;background:#e3e3e3"></div>
<div class="a" style="left:1287px;top:197.5px;width:64.5px;height:31px;background:#fafafa;border:1px solid #e4e4e4;border-radius:3px"></div>
<div class="a" style="left:1319.5px;top:198px;width:1px;height:30px;background:#dcdcdc"></div>
<svg class="a" style="left:1299px;top:207px" width="10" height="11" viewBox="0 0 10 11"><path d="M5 0.3L9.5 5.2H6.3V10.8H3.7V5.2H0.5Z" fill="#555"/></svg>
<svg class="a" style="left:1331px;top:207px" width="10" height="11" viewBox="0 0 10 11"><path d="M5 10.7L9.5 5.8H6.3V0.2H3.7V5.8H0.5Z" fill="#555"/></svg>
<div class="a" style="left:1358px;top:198px;width:38px;height:30px;background:#fff;border:1px solid #e4e4e4;border-radius:2px"></div>
<div class="t" style="left:1378.5px;top:205.5px;font-size:14px;color:#444">1</div>
<div class="t" style="left:1400px;top:205.5px;font-size:14px;color:#333">of 1</div>
<div class="a" style="left:1452.5px;top:197.5px;width:64px;height:31px;background:#f5f5f5;border:1px solid #e0e0e0;border-radius:3px;box-shadow:0 2px 4px rgba(0,0,0,0.08)"></div>
<div class="a" style="left:1484.5px;top:198px;width:1px;height:30px;background:#d8d8d8"></div>
<svg class="a" style="left:1460px;top:203px" width="17" height="17" viewBox="0 0 17 17"><circle cx="6.8" cy="6.8" r="5.3" fill="none" stroke="#555" stroke-width="1.7"/><path d="M10.5 10.5L15.5 15.5" stroke="#555" stroke-width="2.3"/><path d="M6.8 4V9.6M4 6.8H9.6" stroke="#555" stroke-width="1.6"/></svg>
<svg class="a" style="left:1492px;top:203px" width="17" height="17" viewBox="0 0 17 17"><circle cx="6.8" cy="6.8" r="5.3" fill="none" stroke="#555" stroke-width="1.7"/><path d="M10.5 10.5L15.5 15.5" stroke="#555" stroke-width="2.3"/><path d="M4 6.8H9.6" stroke="#555" stroke-width="1.6"/></svg>
<div class="a" style="left:1523.3px;top:197.5px;width:162.5px;height:31px;background:#fafafa;border:1px solid #e4e4e4;border-radius:3px"></div>
<div class="t" style="left:1532.5px;top:204px;font-size:14px;color:#555">75%</div>
<svg class="a" style="left:1666px;top:208px" width="10" height="7"><path d="M0.5 0.5H9.5L5 6.5Z" fill="#444"/></svg>
<div class="a" style="left:1869.5px;top:197.5px;width:32px;height:31px;background:#fafafa;border:1px solid #e4e4e4;border-radius:3px"></div>
<svg class="a" style="left:1877px;top:203px" width="17" height="18" viewBox="0 0 17 18"><path d="M4 1H11L13 3V6H4Z" fill="none" stroke="#555" stroke-width="1.6"/><rect x="0.8" y="6" width="15.4" height="7" rx="1.5" fill="#555"/><rect x="3.5" y="10" width="10" height="7" fill="#fff" stroke="#555" stroke-width="1.4"/><path d="M5.5 12.5H11.5M5.5 14.8H11.5" stroke="#999" stroke-width="1"/></svg>
<div class="a" style="left:1907.3px;top:197.5px;width:32px;height:31px;background:#fafafa;border:1px solid #e4e4e4;border-radius:3px"></div>
<svg class="a" style="left:1915.5px;top:203.5px" width="16" height="17" viewBox="0 0 16 17"><path d="M6.8 0.5H9.2V7H12.5L8 12L3.5 7H6.8Z" fill="#555"/><rect x="0" y="13.5" width="16" height="3" fill="#555"/></svg>
<div class="a" style="left:1946.4px;top:197.5px;width:63px;height:31px;background:#fafafa;border:1px solid #e4e4e4;border-radius:3px"></div>
<div class="t" style="left:1956.5px;top:205.5px;font-size:15px;color:#555">Delete</div>
<div class="a" style="left:1041px;top:239px;width:976px;height:810px;background:#797e88"></div>
<div class="a" style="left:2006px;top:248px;width:10.5px;height:452px;background:#61656e;border-radius:5px"></div>
<div class="a" style="left:1126px;top:239px;width:848.5px;height:810px;background:#fff"></div>
<div class="t" style="left:1203px;top:298.60px;font-family:Liberation Serif,serif;font-size:13.6px;color:#555;letter-spacing:0.25px">Phoenix Supplies Inc.</div>
<div class="t" style="left:1203px;top:317.45px;font-family:Liberation Serif,serif;font-size:13.6px;color:#555;letter-spacing:0.35px">Glenmoor House,</div>
<div class="t" style="left:1203px;top:336.30px;font-family:Liberation Serif,serif;font-size:13.6px;color:#555;letter-spacing:0.35px">Phoenix,</div>
<div class="t" style="left:1203px;top:355.15px;font-family:Liberation Serif,serif;font-size:13.6px;color:#555;letter-spacing:0.3px">AZ 85040, United States</div>
<div class="t" style="left:1203px;top:374.00px;font-family:Liberation Serif,serif;font-size:13.6px;color:#555;letter-spacing:0.65px"><b>Phone</b> +16022784818</div>
<svg class="a" style="left:1700px;top:285px" width="210" height="110" viewBox="0 0 1987 1041"><g fill="none" stroke="#d8402b" stroke-width="46" stroke-linejoin="miter"><path d="M173 835V613H302V742H210"/><path d="M378 592V835M378 703H512V835"/><rect x="588" y="703" width="134" height="110" rx="8"/><path d="M937 813H803V703H937V758H820"/><path d="M1013 835V703H1147V835"/><path d="M1222 680V835"/><path d="M1288 683L1442 835M1442 683L1288 835"/></g><rect x="1199" y="590" width="46" height="46" fill="#d8402b"/><text x="962" y="935" font-family="Liberation Sans" font-weight="bold" font-size="118" fill="#333" textLength="493" lengthAdjust="spacingAndGlyphs">supplies</text><path d="M1650 110Q1690 200 1630 262Q1590 295 1540 310Q1580 268 1610 220Q1640 170 1650 110Z" fill="#a3a3aa"/><path d="M1705 185Q1722 262 1672 305Q1632 330 1598 337Q1650 280 1705 185Z" fill="#a3a3aa"/><path d="M1830 122Q1872 240 1792 322Q1705 392 1578 412L1558 372Q1680 332 1742 272Q1802 200 1830 122Z" fill="#e99b31"/><path d="M1856 268Q1872 372 1792 424Q1702 472 1588 474L1580 432Q1700 412 1772 372Q1832 332 1856 268Z" fill="#e8862d"/><path d="M1806 440Q1790 512 1712 542Q1652 562 1588 562L1590 520Q1680 512 1742 490Q1782 470 1806 440Z" fill="#e4702b"/><path d="M1752 540Q1722 592 1652 602L1588 604L1592 570Q1682 572 1752 540Z" fill="#e05c2a"/><path d="M1422 518A75 75 0 1 1 1545 500" fill="none" stroke="#d9452a" stroke-width="56"/><path d="M1410 470L1352 492L1412 528Z" fill="#d9452a"/><path d="M1515 455Q1605 510 1585 625Q1565 745 1450 832Q1500 722 1502 642Q1502 575 1470 545Z" fill="#d9452a"/><path d="M1505 600L1455 655L1512 640Z M1510 670L1465 730L1515 712Z" fill="#d9452a"/></svg>
<div class="a" style="left:1202px;top:420.5px;width:696px;height:41px;background:#5e6e87"></div>
<div class="t" style="left:1210px;top:433.5px;font-size:16.4px;color:#fff">INVOICE NO.</div>
<div class="a" style="left:1314px;top:433.5px;width:71px;height:16.5px;border:1px solid #c98d3f;background:rgba(255,220,180,0.15)"></div>
<div class="t" style="left:1315.5px;top:434px;font-size:17px;color:#f4f0ea">1243230</div>
<div class="a" style="left:1802px;top:442px;width:89.5px;height:15px;border:1px solid #c98d3f"></div>
<div class="t" style="left:1803px;top:442px;font-size:16.5px;color:#f4f0ea">20.08.2022</div>
<div class="t" style="left:1210.5px;top:491.5px;font-size:11.1px;color:#555">BILL TO</div>
<div class="t" style="left:1384px;top:491.5px;font-size:11.1px;color:#555">SHIP TO</div>
<div class="t" style="left:1558.5px;top:491.5px;font-size:11.1px;color:#555">CUST ORDER NO</div>
<div class="a" style="left:1202px;top:506px;width:696px;height:1.2px;background:#c4c8cc"></div>
<div class="t" style="left:1210.5px;top:513px;font-family:Liberation Serif,serif;font-size:13.8px;color:#525252">Acme Inc.</div>
<div class="t" style="left:1210.5px;top:528px;font-family:Liberation Serif,serif;font-size:13.8px;color:#525252">12 E. 49<sup style="font-size:8px;vertical-align:4px">th</sup> St, Floor 11</div>
<div class="t" style="left:1210.5px;top:544px;font-family:Liberation Serif,serif;font-size:13.8px;color:#525252">New York, NY 10017</div>
<div class="t" style="left:1384px;top:511px;font-family:Liberation Serif,serif;font-size:13.8px;color:#525252;font-size:14.8px">Same as recipient</div>
<div class="a" style="left:1557px;top:512.5px;width:53px;height:12px;border:1px solid #f0b87a;background:#fbeee0"></div>
<div class="t" style="left:1558px;top:513px;font-family:Liberation Serif,serif;font-size:13.8px;color:#525252">MF-3467</div>
<div class="a" style="left:1202px;top:583px;width:696px;height:29.5px;background:#5e6e87"></div>
<div class="t" style="left:1210px;top:594px;font-size:11.3px;color:#fff">QUANTITY</div>
<div class="t" style="left:1326.5px;top:594px;font-size:11.3px;color:#fff">DESCRIPTION</div>
<div class="t" style="left:1608px;top:594px;font-size:11.3px;color:#fff">ITEM NO</div>
<div class="t" style="left:1710.5px;top:594px;font-size:11.3px;color:#fff">UNIT PRICE</div>
<div class="t" style="left:1856px;top:594px;font-size:11.3px;color:#fff">TOTAL</div>
<div class="a" style="left:1136px;top:621px;width:807.5px;height:16.5px;border:1px solid #e9a0ec;background:#fdf8fd"></div>
<div class="a" style="left:1136px;top:621px;width:22px;height:16.5px;background:#cb5fd0"></div>
<div class="t" style="left:1143.5px;top:624px;font-size:11px;font-weight:bold;color:#fff">1</div>
<div class="a" style="left:1209px;top:621.5px;width:9px;height:15.5px;border:1px solid #e8a270;background:#f9ebdf"></div>
<div class="a" style="left:1325px;top:621.5px;width:245px;height:15.5px;border:1px solid #e8a270;background:#f9ebdf"></div>
<div class="a" style="left:1578px;top:621.5px;width:73.5px;height:15.5px;border:1px solid #e8a270;background:#f6e3cc"></div>
<div class="a" style="left:1854px;top:621.5px;width:35px;height:15.5px;border:1px solid #e8a270;background:#f6e3cc"></div>
<div class="t" style="left:1210px;top:622px;font-family:Liberation Serif,serif;font-size:14.2px;color:#525252">1 ea</div>
<div class="t" style="left:1326px;top:622px;font-family:Liberation Serif,serif;font-size:14.2px;color:#525252;font-size:14.6px">Apple Earpods With Lightning Connector</div>
<div class="t" style="left:1579px;top:622px;font-family:Liberation Serif,serif;font-size:14.2px;color:#525252;font-size:13.8px">MMTN2ZM</div>
<div class="t" style="left:1739px;top:622px;font-family:Liberation Serif,serif;font-size:14.2px;color:#525252">29.00</div>
<div class="t" style="left:1855px;top:622px;font-family:Liberation Serif,serif;font-size:14.2px;color:#525252">29.00</div>
<div class="a" style="left:1202px;top:641.2px;width:696px;height:1px;background:#dcdcdc"></div>
<div class="a" style="left:1202px;top:685.2px;width:696px;height:1px;background:#dcdcdc"></div>
<div class="a" style="left:1202px;top:713.1px;width:696px;height:1px;background:#dcdcdc"></div>
<div class="a" style="left:1202px;top:741.0px;width:696px;height:1px;background:#dcdcdc"></div>
<div class="a" style="left:1202px;top:768.9000000000001px;width:696px;height:1px;background:#dcdcdc"></div>
<div class="a" style="left:1202px;top:796.8000000000001px;width:696px;height:1px;background:#dcdcdc"></div>
<div class="a" style="left:1202px;top:824.7px;width:696px;height:1px;background:#dcdcdc"></div>
<div class="a" style="left:1202px;top:852.6px;width:696px;height:1px;background:#dcdcdc"></div>
<div class="a" style="left:1202px;top:880.5px;width:696px;height:1px;background:#dcdcdc"></div>
<div class="a" style="left:1202px;top:908.4000000000001px;width:696px;height:1px;background:#dcdcdc"></div>
<div class="a" style="left:1202px;top:936.3000000000001px;width:696px;height:1px;background:#dcdcdc"></div>
<div class="a" style="left:1202px;top:964.2px;width:696px;height:1px;background:#dcdcdc"></div>
<div class="a" style="left:1202px;top:992.1px;width:696px;height:1px;background:#dcdcdc"></div>
<div class="a" style="left:1202px;top:1020px;width:696px;height:1.2px;background:#9a9a9a"></div>
<div class="t" style="left:1557px;top:1029px;font-size:12px;color:#555">SUBTOTAL</div>
<div class="t" style="left:1856px;top:1029px;font-family:Liberation Serif,serif;font-size:14.2px;color:#525252">29.00</div>
<div class="a" style="left:0;top:-30px;width:2046px;height:1071px;border-radius:0 0 8px 8px;box-shadow:0 0 0 40px #20242e;pointer-events:none"></div>
</body></html>
